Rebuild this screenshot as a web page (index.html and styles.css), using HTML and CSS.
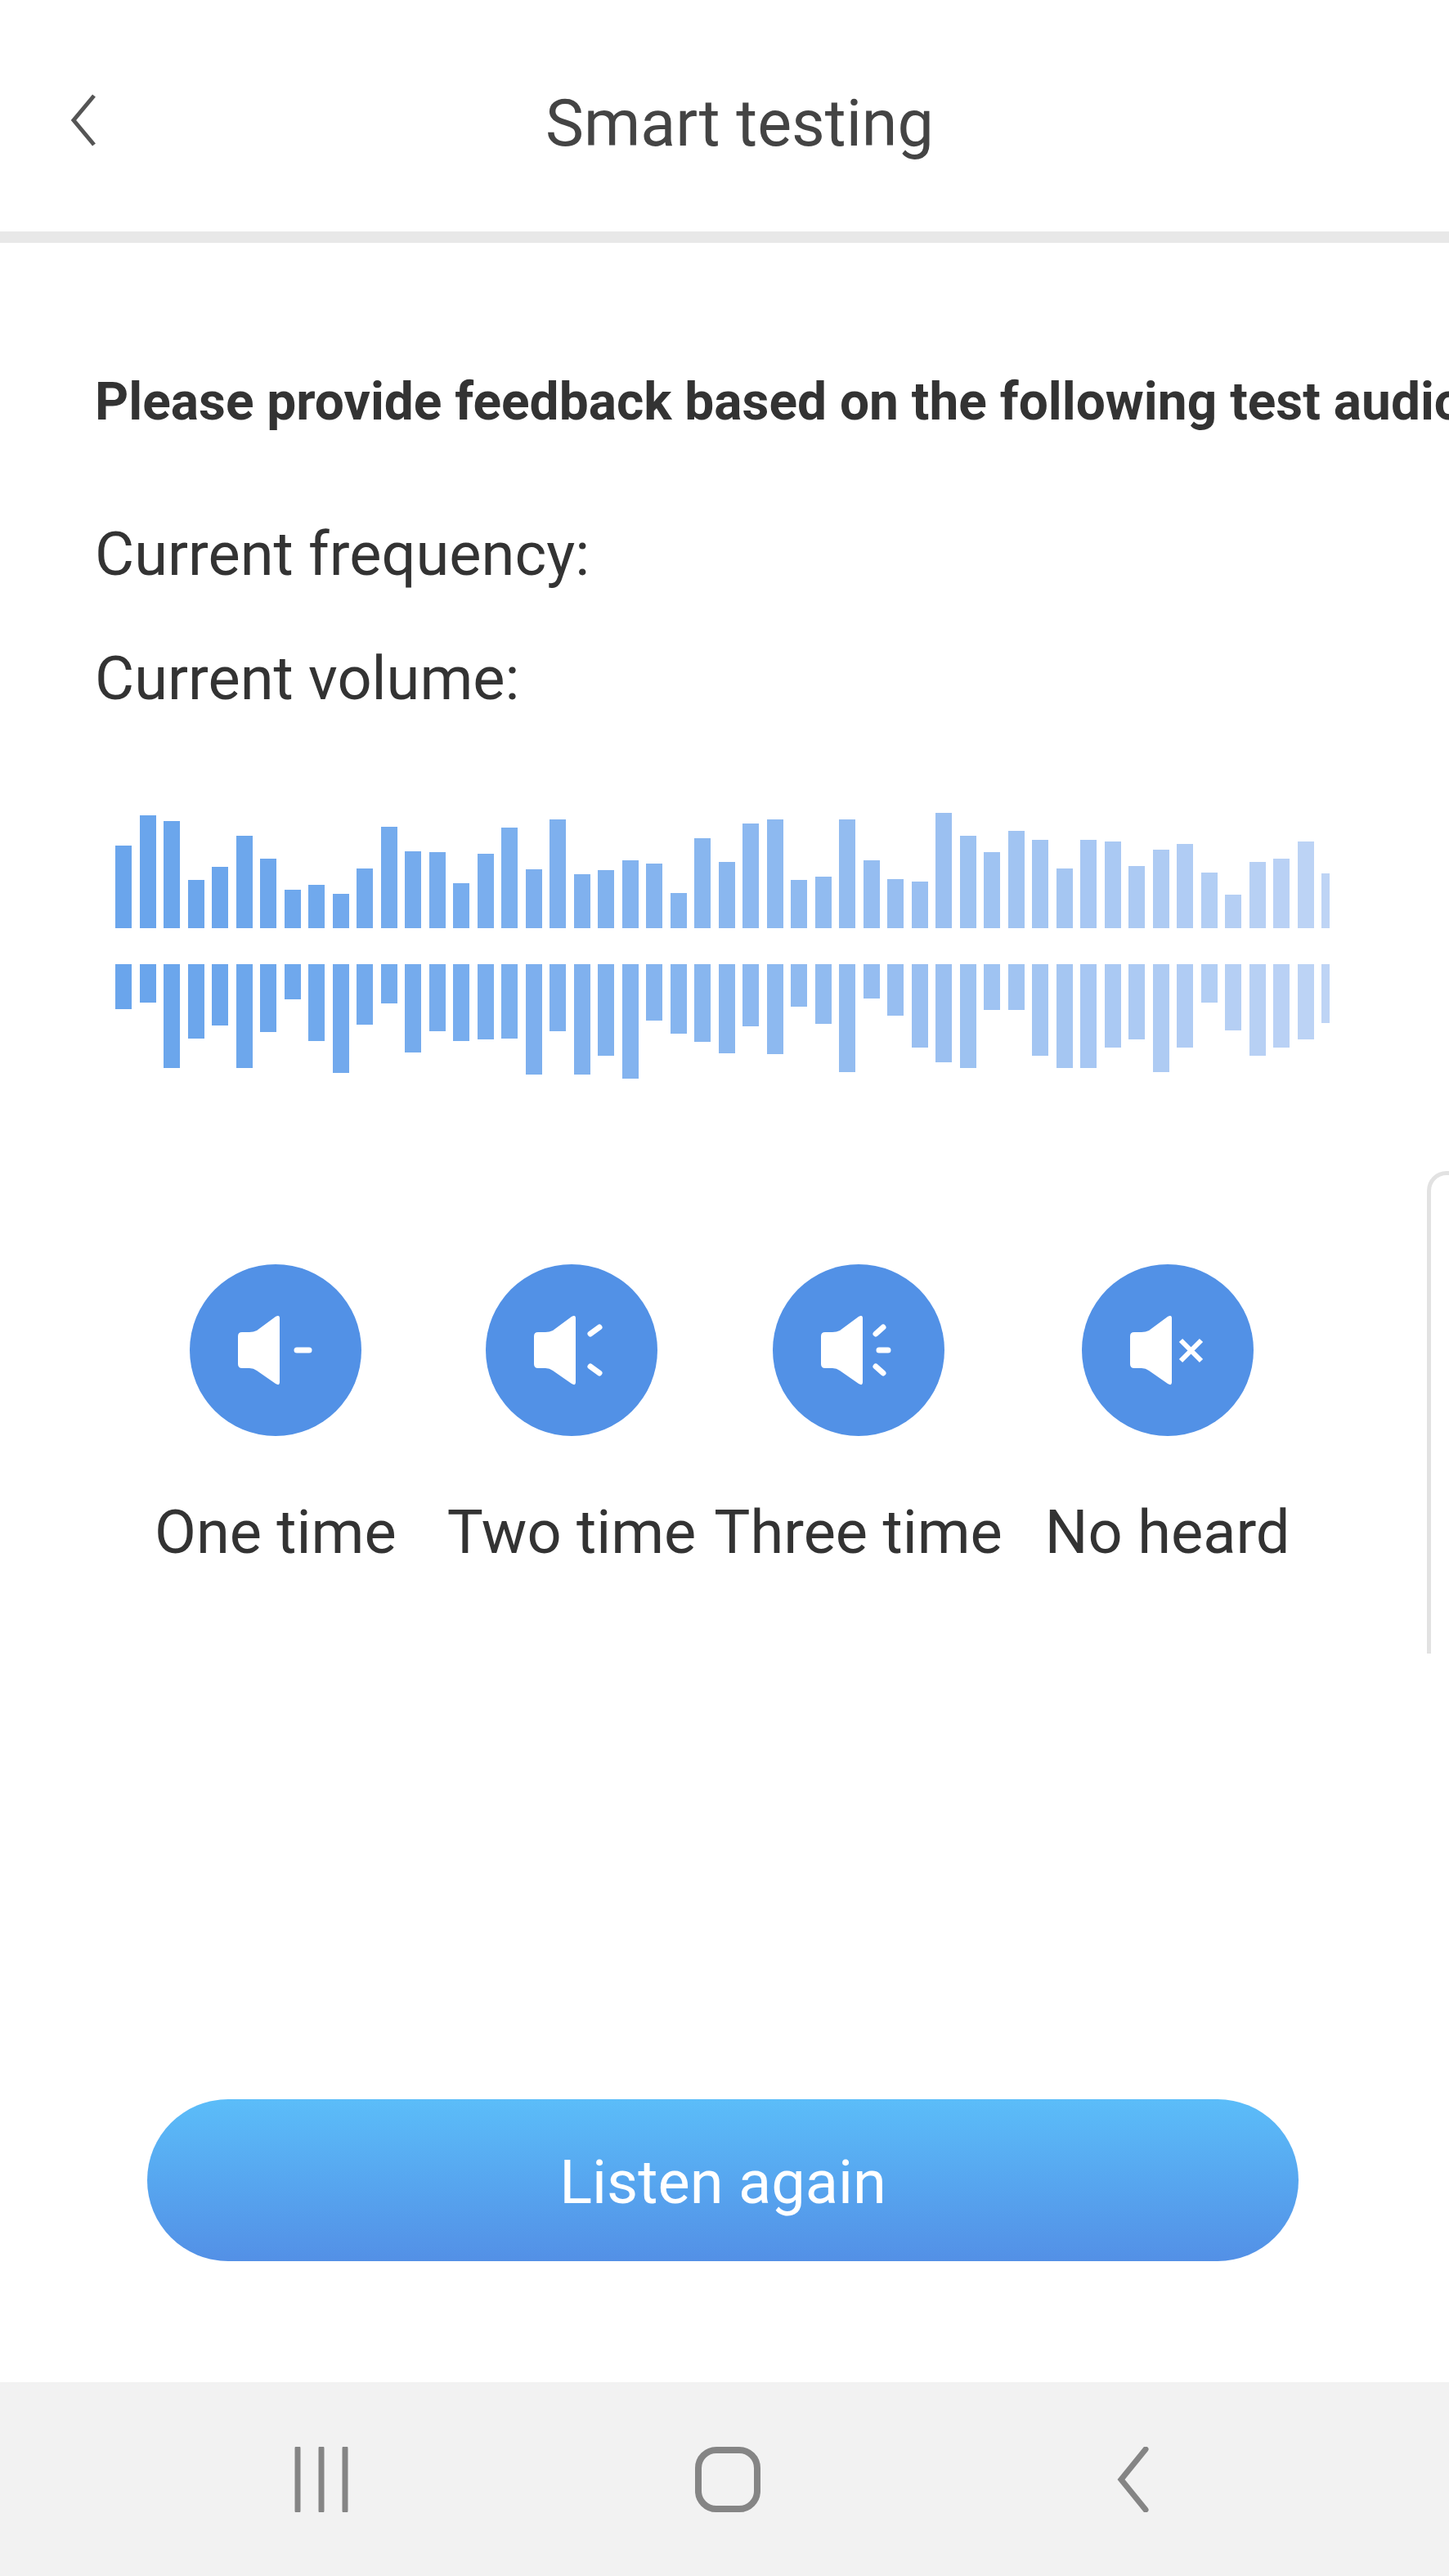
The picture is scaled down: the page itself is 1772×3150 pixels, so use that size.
FILE: index.html
```html
<!DOCTYPE html>
<html lang="en">
<head>
    <meta charset="UTF-8">
    <meta name="viewport" content="width=device-width, initial-scale=1.0">
    <title>Smart testing</title>
    <link rel="stylesheet" href="styles.css">
</head>
<body>
    <header>
        <svg class="back-icon" viewBox="0 0 32 64" aria-hidden="true">
            <path d="M29 2 L4 32 L29 62"/>
        </svg>
        <h1>Smart testing</h1>
    </header>

    <main>
        <p class="prompt">Please provide feedback based on the following test audio</p>
        <p class="info first">Current frequency:</p>
        <p class="info">Current volume:</p>

        <section class="wave">
            <div class="wave-row wave-top" id="wave-top"></div>
            <div class="wave-row wave-bottom" id="wave-bottom"></div>
        </section>

        <section class="options">
            <div class="option">
                <svg class="option-icon" viewBox="0 0 210 210" aria-hidden="true">
                    <circle class="disc" cx="105" cy="105" r="105"/>
                    <path class="cone" d="M105 64 L82 81 Q78 83 73 83 L64 83 Q59 83 59 88 L59 122 Q59 127 64 127 L73 127 Q78 127 82 130 L105 146 Q110 149 110 144 L110 66 Q110 61 105 64Z"/>
                    <path class="mark" d="M131 105 H146"/>
                </svg>
                <span>One time</span>
            </div>
            <div class="option">
                <svg class="option-icon" viewBox="0 0 210 210" aria-hidden="true">
                    <circle class="disc" cx="105" cy="105" r="105"/>
                    <path class="cone" d="M105 64 L82 81 Q78 83 73 83 L64 83 Q59 83 59 88 L59 122 Q59 127 64 127 L73 127 Q78 127 82 130 L105 146 Q110 149 110 144 L110 66 Q110 61 105 64Z"/>
                    <path class="mark" d="M128 85 L139 77 M128 125 L139 133"/>
                </svg>
                <span>Two time</span>
            </div>
            <div class="option">
                <svg class="option-icon" viewBox="0 0 210 210" aria-hidden="true">
                    <circle class="disc" cx="105" cy="105" r="105"/>
                    <path class="cone" d="M105 64 L82 81 Q78 83 73 83 L64 83 Q59 83 59 88 L59 122 Q59 127 64 127 L73 127 Q78 127 82 130 L105 146 Q110 149 110 144 L110 66 Q110 61 105 64Z"/>
                    <path class="mark" d="M126 85 L135 77 M130 105 H141 M126 125 L135 133"/>
                </svg>
                <span>Three time</span>
            </div>
            <div class="option">
                <svg class="option-icon" viewBox="0 0 210 210" aria-hidden="true">
                    <circle class="disc" cx="105" cy="105" r="105"/>
                    <path class="cone" d="M105 64 L82 81 Q78 83 73 83 L64 83 Q59 83 59 88 L59 122 Q59 127 64 127 L73 127 Q78 127 82 130 L105 146 Q110 149 110 144 L110 66 Q110 61 105 64Z"/>
                    <path class="cross" d="M121 93 L146 118 M146 93 L121 118"/>
                </svg>
                <span>No heard</span>
            </div>
        </section>

        <div class="side-panel"></div>

        <button class="listen-btn">Listen again</button>
    </main>

    <nav class="system-bar">
        <svg class="recent-icon" viewBox="0 0 66 80" aria-hidden="true">
            <path d="M4 2 V78 M33 2 V78 M62 2 V78"/>
        </svg>
        <div class="home-icon"></div>
        <svg class="return-icon" viewBox="0 0 40 80" aria-hidden="true">
            <path d="M36 3 L6 40 L36 77"/>
        </svg>
    </nav>

    <script>
        const topBars = [101,138,131,59,75,113,85,47,53,42,73,124,94,93,55,91,123,72,133,66,71,83,79,43,110,81,
            128,133,59,63,133,83,60,57,141,113,93,119,108,73,108,106,76,96,103,68,41,81,85,106,67];
        const bottomBars = [55,47,127,91,75,127,83,43,94,133,74,48,108,82,94,92,91,135,82,135,112,140,69,85,95,109,
            76,110,52,73,132,42,63,102,120,127,56,56,112,127,127,102,92,132,102,47,81,112,102,92,72];

        // bars fade from left to right, slowly at first
        function barColor(index, count) {
            const t = Math.pow(index / (count - 1), 1.4);
            const r = Math.round(106 + (190 - 106) * t);
            const g = Math.round(165 + (212 - 165) * t);
            const b = Math.round(236 + (245 - 236) * t);
            return `rgb(${r}, ${g}, ${b})`;
        }

        function drawBars(containerId, heights) {
            const container = document.getElementById(containerId);
            heights.forEach((height, index) => {
                const bar = document.createElement('div');
                bar.className = 'bar';
                bar.style.height = height + 'px';
                bar.style.backgroundColor = barColor(index, heights.length);
                container.appendChild(bar);
            });
        }

        drawBars('wave-top', topBars);
        drawBars('wave-bottom', bottomBars);
    </script>
</body>
</html>
```

FILE: styles.css
```css
* {
    margin: 0;
    padding: 0;
    box-sizing: border-box;
}

html, body {
    height: 100%;
}

body {
    font-family: Roboto, Arial, sans-serif;
    color: #333;
    background-color: #fff;
    display: flex;
    flex-direction: column;
    overflow: hidden;
}

header {
    display: flex;
    align-items: center;
    height: 297px;
    padding-left: 86px;
    border-bottom: 14px solid #e8e8e8;
    flex-shrink: 0;
}

.back-icon {
    width: 32px;
    height: 64px;
    margin-top: 11px;
    fill: none;
    stroke: #555;
    stroke-width: 5;
}

h1 {
    font-size: 79px;
    font-weight: 400;
    color: #444;
    margin-left: 549px;
    margin-top: 19px;
    line-height: 1;
}

main {
    flex: 1;
    position: relative;
    padding-top: 165px;
}

.prompt {
    font-size: 64px;
    font-weight: 700;
    line-height: 60px;
    margin-left: 116px;
    white-space: nowrap;
}

.info {
    font-size: 74px;
    line-height: 80px;
    margin-left: 116px;
    margin-top: 72px;
}

.info.first {
    margin-top: 116px;
}

.wave {
    margin: 124px 0 0 141px;
}

.wave-row {
    display: flex;
    gap: 9.5px;
    height: 141px;
}

.wave-top {
    align-items: flex-end;
}

.wave-bottom {
    margin-top: 44px;
    align-items: flex-start;
}

.bar {
    width: 20px;
    flex-shrink: 0;
}

.bar:last-child {
    width: 10px;
}

.options {
    display: flex;
    margin: 226px 0 0 189px;
}

.option {
    display: flex;
    flex-direction: column;
    align-items: center;
    gap: 78px;
    font-size: 74px;
    line-height: 80px;
    white-space: nowrap;
}

.option:nth-child(2) {
    margin-left: 62px;
}

.option:nth-child(3) {
    margin-left: 22px;
}

.option:nth-child(4) {
    margin-left: 52px;
}

.option-icon {
    width: 210px;
    height: 210px;
}

.disc {
    fill: #5291e6;
}

.cone {
    fill: #fff;
}

.mark {
    fill: none;
    stroke: #fff;
    stroke-width: 7;
    stroke-linecap: round;
}

.cross {
    fill: none;
    stroke: #fff;
    stroke-width: 6;
}

.side-panel {
    position: absolute;
    top: 1135px;
    right: 0;
    width: 27px;
    height: 590px;
    border-left: 5px solid #e2e2e2;
    border-top: 5px solid #e2e2e2;
    border-top-left-radius: 24px;
}

.listen-btn {
    position: absolute;
    left: 180px;
    bottom: 148px;
    width: 1408px;
    height: 198px;
    border: none;
    border-radius: 99px;
    background: linear-gradient(#5bbdf9, #5390e6);
    color: #fff;
    font-family: inherit;
    font-size: 74px;
    padding-top: 4px;
}

.system-bar {
    display: flex;
    align-items: center;
    height: 237px;
    padding: 0 0 0 360px;
    background-color: #f2f2f2;
    flex-shrink: 0;
}

.recent-icon {
    width: 66px;
    height: 80px;
    fill: none;
    stroke: #858585;
    stroke-width: 7;
    stroke-linecap: round;
}

.home-icon {
    width: 80px;
    height: 80px;
    margin-left: 424px;
    border: 8px solid #858585;
    border-radius: 26px;
}

.return-icon {
    width: 40px;
    height: 80px;
    margin-left: 435px;
    fill: none;
    stroke: #858585;
    stroke-width: 7;
    stroke-linecap: round;
}
```
